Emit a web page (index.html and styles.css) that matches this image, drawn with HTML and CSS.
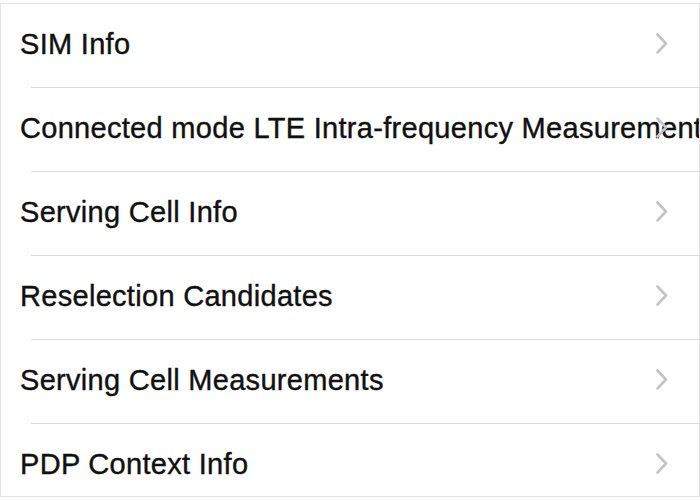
FILE: index.html
```html
<html lang="en"><head>
    <meta charset="UTF-8">
    <meta name="viewport" content="width=device-width, initial-scale=1.0">
    <title>Field Test</title>
    <link rel="stylesheet" href="styles.css">
</head>
<body>
    <div class="lista">
        <div class="item">
            <span class="titulo">SIM Info</span>
            <svg class="seta" width="12" height="21" viewBox="0 0 12 21"><path d="M1.5 1.5 L10 10.5 L1.5 19.5" fill="none" stroke="#c4c4c8" stroke-width="2.6" stroke-linecap="round" stroke-linejoin="round"/></svg>
        </div>
        <div class="item">
            <span class="titulo">Connected mode LTE Intra-frequency Measurement</span>
            <svg class="seta" width="12" height="21" viewBox="0 0 12 21"><path d="M1.5 1.5 L10 10.5 L1.5 19.5" fill="none" stroke="#c4c4c8" stroke-width="2.6" stroke-linecap="round" stroke-linejoin="round"/></svg>
        </div>
        <div class="item">
            <span class="titulo">Serving Cell Info</span>
            <svg class="seta" width="12" height="21" viewBox="0 0 12 21"><path d="M1.5 1.5 L10 10.5 L1.5 19.5" fill="none" stroke="#c4c4c8" stroke-width="2.6" stroke-linecap="round" stroke-linejoin="round"/></svg>
        </div>
        <div class="item">
            <span class="titulo">Reselection Candidates</span>
            <svg class="seta" width="12" height="21" viewBox="0 0 12 21"><path d="M1.5 1.5 L10 10.5 L1.5 19.5" fill="none" stroke="#c4c4c8" stroke-width="2.6" stroke-linecap="round" stroke-linejoin="round"/></svg>
        </div>
        <div class="item">
            <span class="titulo">Serving Cell Measurements</span>
            <svg class="seta" width="12" height="21" viewBox="0 0 12 21"><path d="M1.5 1.5 L10 10.5 L1.5 19.5" fill="none" stroke="#c4c4c8" stroke-width="2.6" stroke-linecap="round" stroke-linejoin="round"/></svg>
        </div>
        <div class="item">
            <span class="titulo">PDP Context Info</span>
            <svg class="seta" width="12" height="21" viewBox="0 0 12 21"><path d="M1.5 1.5 L10 10.5 L1.5 19.5" fill="none" stroke="#c4c4c8" stroke-width="2.6" stroke-linecap="round" stroke-linejoin="round"/></svg>
        </div>
    </div>
</body>
</html>
```
FILE: styles.css
```css
body {
    margin: 0;
    padding: 3px 0 0 0;
    background: white;
    font-family: "Liberation Sans", Arial, sans-serif;
    overflow: hidden;
}

/*caixa com a lista*/
.lista {
    border: 1px solid #e4e4e4;
    height: 494px;
    box-sizing: border-box;
    overflow: hidden;
}

.item {
    height: 84px;
    position: relative;
    display: flex;
    align-items: center;
}

/*linha entre os itens*/
.item::after {
    content: "";
    position: absolute;
    left: 30px;
    right: 0;
    bottom: 0;
    height: 1px;
    background: #d9d9d9;
}

.item:last-child::after {
    display: none;
}

.titulo {
    padding-left: 19px;
    padding-bottom: 3px;
    font-size: 29px;
    letter-spacing: 0.3px;
    color: #111;
    white-space: nowrap;
    -webkit-text-stroke: 0.4px #111;
}

/*seta cinza da direita*/
.seta {
    position: absolute;
    right: 31px;
    top: 29px;
}
```
